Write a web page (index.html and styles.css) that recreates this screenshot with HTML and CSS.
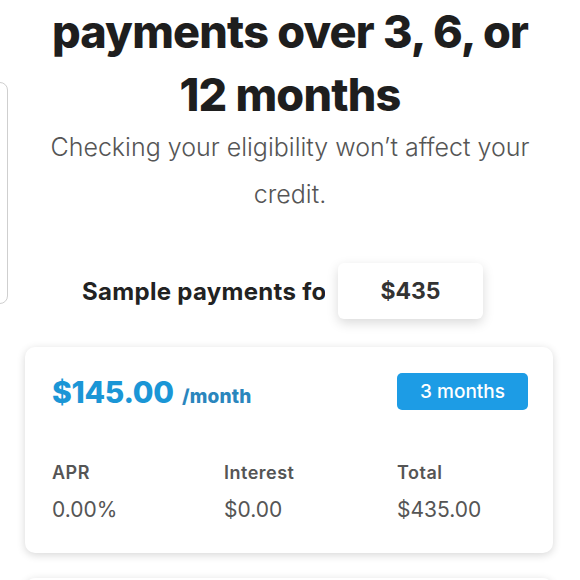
FILE: index.html
```html
<!DOCTYPE html>
<html lang="en">
<head>
<meta charset="utf-8">
<link rel="stylesheet" href="styles.css">
</head>
<body>
<div class="side-panel"></div>
<main class="page">
  <h1 class="title">payments over 3, 6, or<br>12 months</h1>
  <p class="subtitle">Checking your eligibility won’t affect your<br>credit.</p>
  <div class="amount-row">
    <div class="amount-label">Sample payments for</div>
    <div class="amount-input">$435</div>
  </div>
  <section class="plan-card">
    <div class="plan-head">
      <div class="plan-price">$145.00 <span class="per">/month</span></div>
      <div class="plan-badge">3 months</div>
    </div>
    <div class="plan-stats">
      <div class="stat"><div class="stat-label">APR</div><div class="stat-value">0.00%</div></div>
      <div class="stat"><div class="stat-label">Interest</div><div class="stat-value">$0.00</div></div>
      <div class="stat"><div class="stat-label">Total</div><div class="stat-value">$435.00</div></div>
    </div>
  </section>
  <section class="plan-card next"></section>
</main>
</body>
</html>
```
FILE: styles.css
```css
html, body {
  margin: 0;
  padding: 0;
  background: #ffffff;
  overflow: hidden;
}
body {
  font-family: Inter, "Noto Sans", sans-serif;
  color: #1e1e1e;
  width: 580px;
  height: 580px;
  position: relative;
}
.side-panel {
  position: absolute;
  left: -20px;
  top: 82px;
  width: 26px;
  height: 220px;
  border: 1px solid #cfcfcf;
  border-radius: 8px;
  background: #fff;
}
.page {
  display: flex;
  flex-direction: column;
}
.title {
  margin: 0;
  font-size: 45px;
  font-weight: 800;
  line-height: 63px;
  letter-spacing: -0.8px;
  text-align: center;
  color: #1e1e1e;
}
.subtitle {
  margin: -2px 0 0;
  font-size: 25px;
  font-weight: 300;
  line-height: 47px;
  text-align: center;
  color: #555;
}
.amount-row {
  display: flex;
  align-items: center;
  gap: 13px;
  padding-left: 82px;
  margin-top: 45px;
}
.amount-label {
  width: 243px;
  overflow: hidden;
  white-space: nowrap;
  font-size: 24px;
  font-weight: 700;
  letter-spacing: 0.3px;
  color: #222;
}
.amount-input {
  width: 145px;
  height: 56px;
  display: flex;
  align-items: center;
  justify-content: center;
  background: #fff;
  border-radius: 6px;
  box-shadow: 0 4px 12px rgba(0,0,0,0.15);
  font-size: 23px;
  font-weight: 700;
  color: #333;
}
.plan-card {
  margin: 28px 27px 0 25px;
  background: #fff;
  border-radius: 10px;
  box-shadow: 0 2px 8px rgba(0,0,0,0.16);
  padding: 26px 25px 31px 27px;
}
.plan-card.next {
  margin-top: 25px;
  height: 100px;
  padding: 0;
}
.plan-head {
  display: flex;
  justify-content: space-between;
  align-items: center;
}
.plan-price {
  font-size: 30px;
  font-weight: 800;
  color: #1b96d6;
  letter-spacing: -0.3px;
}
.plan-price .per {
  margin-left: 2px;
  font-size: 19px;
  font-weight: 800;
  color: #2a86bd;
  letter-spacing: 0.2px;
}
.plan-badge {
  width: 131px;
  height: 37px;
  display: flex;
  align-items: center;
  justify-content: center;
  background: #1d9ce5;
  border-radius: 5px;
  color: #fff;
  font-size: 19px;
  font-weight: 500;
}
.plan-stats {
  display: grid;
  grid-template-columns: 172px 173px auto;
  margin-top: 52px;
}
.stat-label {
  font-size: 18px;
  font-weight: 600;
  color: #555;
  letter-spacing: 0.5px;
}
.stat-value {
  margin-top: 14px;
  font-size: 21px;
  font-weight: 400;
  color: #555;
}
```
